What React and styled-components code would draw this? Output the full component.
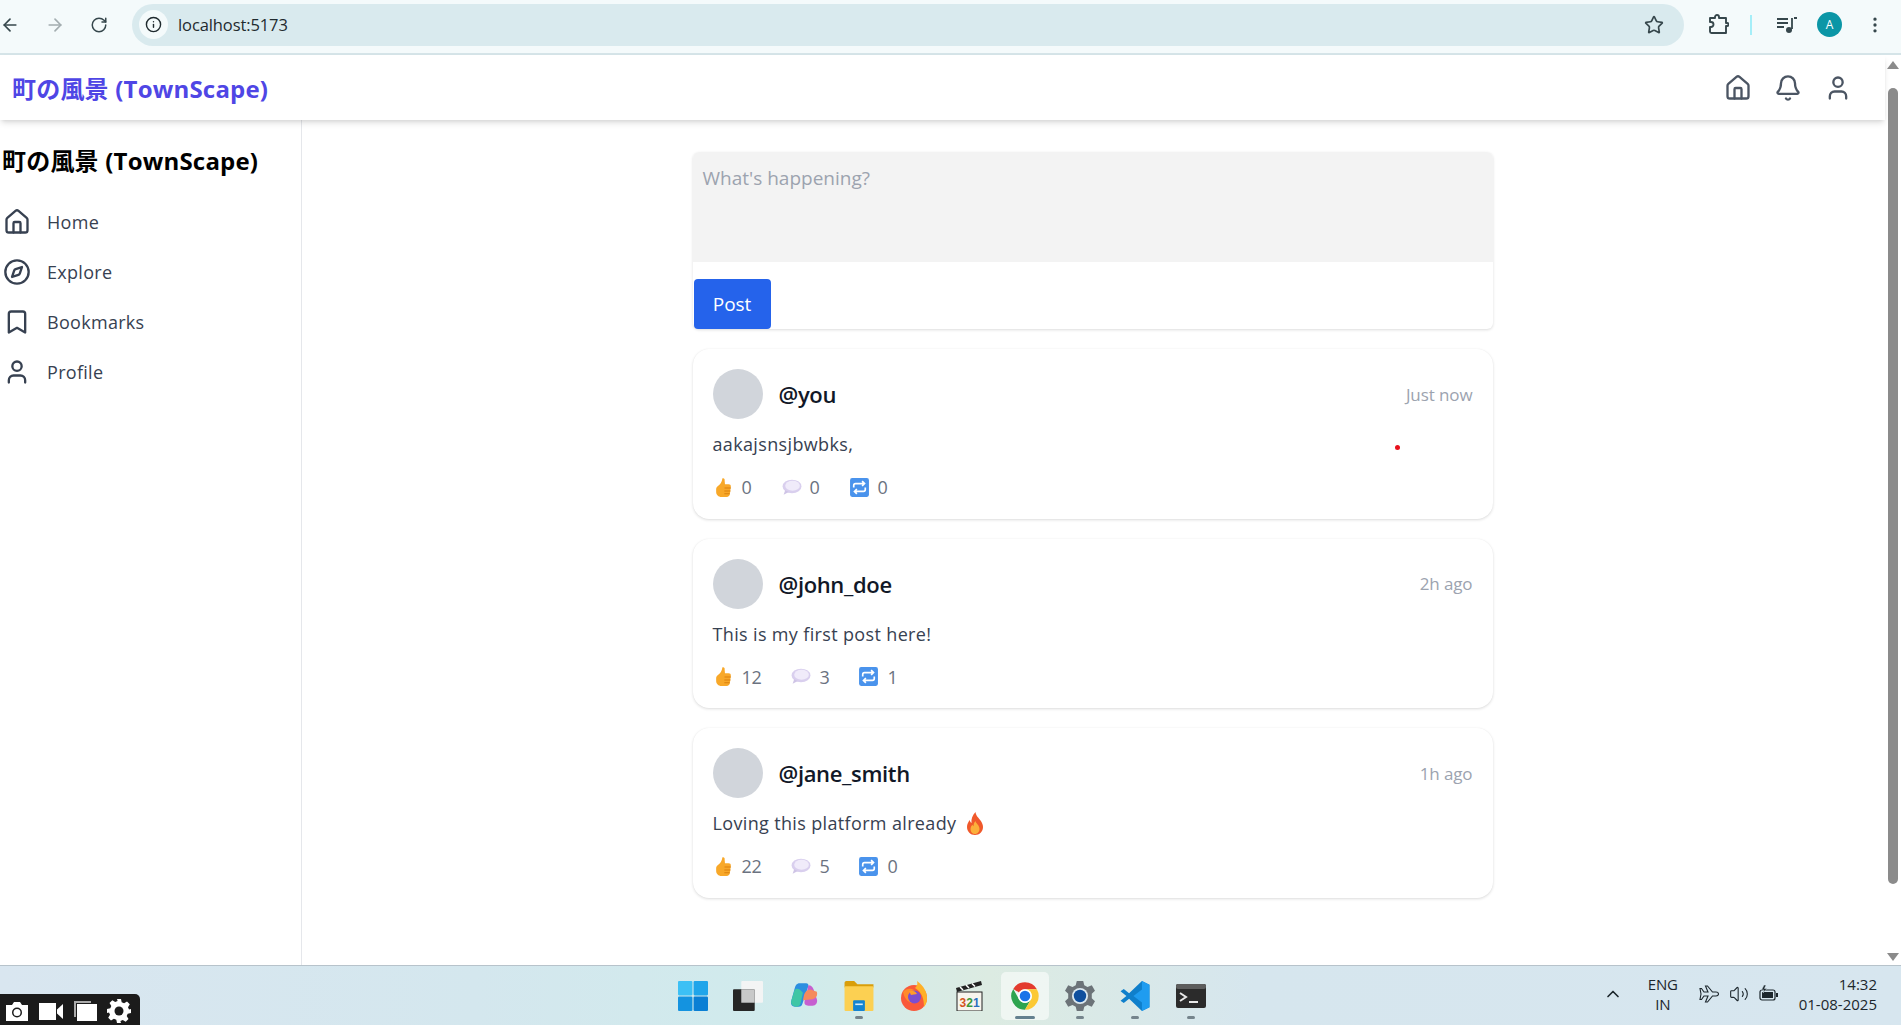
import React from 'react';
import styled, { createGlobalStyle } from 'styled-components';
import {
  ArrowLeft, ArrowRight, RotateCw, Info, Star, EllipsisVertical,
  House, Bell, User, Compass, Bookmark, ChevronUp, Volume2,
} from 'lucide-react';

const FONT = '"Open Sans", "Noto Sans CJK JP", sans-serif';

const GlobalStyle = createGlobalStyle`
  html, body { margin: 0; padding: 0; height: 100%; overflow: hidden; background: #fff; }
  * { box-sizing: border-box; }
  body { font-family: ${FONT}; }
`;

const Screen = styled.div`
  position: relative;
  display: flex;
  flex-direction: column;
  width: 1901px;
  height: 1025px;
  overflow: hidden;
`;

/* browser toolbar */
const ChromeBar = styled.div`
  flex: 0 0 55px;
  display: flex;
  align-items: center;
  padding: 0 0 4px 0;
  background: #f4fafb;
  border-bottom: 2px solid #d5e4e8;
`;

const NavButtons = styled.div`
  display: flex;
  align-items: center;
  gap: 25px;
  width: 132px;
  color: #36474c;
`;

const UrlPill = styled.div`
  flex: 0 0 1552px;
  height: 42px;
  display: flex;
  align-items: center;
  gap: 10px;
  padding: 0 20px 0 7px;
  border-radius: 21px;
  background: #d9eaee;
  color: #1f2a2e;
  font-size: 16.5px;
  letter-spacing: -0.1px;
`;

const InfoChip = styled.span`
  width: 29px;
  height: 29px;
  display: flex;
  align-items: center;
  justify-content: center;
  border-radius: 50%;
  background: #f4fafb;
`;

const UrlText = styled.span`
  flex: 1;
`;

const ChromeTools = styled.div`
  flex: 1;
  display: flex;
  align-items: center;
  padding-left: 24px;
  color: #36474c;
`;

const ToolDivider = styled.span`
  width: 2px;
  height: 20px;
  margin: 0 25px 0 21px;
  background: #a5eef8;
`;

const ProfileBadge = styled.span`
  width: 25px;
  height: 25px;
  margin: 0 23px 0 20px;
  display: flex;
  align-items: center;
  justify-content: center;
  border-radius: 50%;
  background: #0b96a6;
  color: #fff;
  font-size: 12px;
`;

/* page */
const Viewport = styled.div`
  flex: 1;
  min-height: 0;
  display: flex;
`;

const Page = styled.div`
  flex: 1;
  min-width: 0;
  display: flex;
  flex-direction: column;
`;

const TopNav = styled.header`
  position: relative;
  z-index: 1;
  flex: 0 0 65px;
  display: flex;
  align-items: center;
  justify-content: space-between;
  padding: 0 33px 0 12px;
  background: #fff;
  box-shadow: 0 4px 6px -1px rgba(0, 0, 0, 0.12), 0 2px 4px -2px rgba(0, 0, 0, 0.1);
`;

const Brand = styled.div`
  color: #4f46e5;
  font-size: 24px;
  font-weight: 700;
  letter-spacing: 0.2px;
`;

const TopIcons = styled.div`
  display: flex;
  align-items: center;
  gap: 22px;
  color: #4b5563;
`;

const Body = styled.div`
  flex: 1;
  min-height: 0;
  display: flex;
`;

const Sidebar = styled.aside`
  flex: 0 0 302px;
  display: flex;
  flex-direction: column;
  padding: 23px 0 0 2px;
  background: #fff;
  border-right: 1px solid #e5e7eb;
`;

const SideTitle = styled.h2`
  margin: 0 0 18px;
  color: #000;
  font-size: 24px;
  font-weight: 700;
  line-height: 36px;
  letter-spacing: 0.2px;
  white-space: nowrap;
`;

const SideItem = styled.div`
  height: 50px;
  display: flex;
  align-items: center;
  gap: 16px;
  padding-left: 1px;
  color: #374151;
  font-size: 18px;
  letter-spacing: 0.3px;
`;

const Main = styled.main`
  flex: 1;
  display: flex;
  justify-content: center;
  padding: 32px 2px 0 0;
  background: #fff;
`;

const Feed = styled.div`
  width: 800px;
  display: flex;
  flex-direction: column;
  gap: 20px;
`;

const Composer = styled.section`
  display: flex;
  flex-direction: column;
  align-items: flex-start;
  gap: 17px;
  border-radius: 6px;
  background: #fff;
  box-shadow: 0 1px 3px rgba(0, 0, 0, 0.14);
`;

const ComposerInput = styled.textarea`
  width: 100%;
  height: 110px;
  padding: 13px 10px;
  border: none;
  border-radius: 6px 6px 0 0;
  outline: none;
  resize: none;
  background: #f3f3f3;
  font-family: ${FONT};
  font-size: 19px;
  &::placeholder { color: #9ca3af; opacity: 1; }
`;

const PostButton = styled.button`
  width: 77px;
  height: 50px;
  margin-left: 1px;
  border: none;
  border-radius: 4px;
  background: #2563eb;
  color: #fff;
  font-family: ${FONT};
  font-size: 19px;
  letter-spacing: -0.1px;
`;

const Card = styled.article`
  height: 169.6px;
  padding: 20px;
  border-radius: 16px;
  background: #fff;
  box-shadow: 0 1px 3px rgba(0, 0, 0, 0.14), 0 0 1px rgba(0, 0, 0, 0.05);
`;

const CardHeader = styled.div`
  display: flex;
  align-items: center;
  gap: 16px;
`;

const Avatar = styled.div`
  width: 50px;
  height: 50px;
  border-radius: 50%;
  background: #d1d5db;
`;

const Handle = styled.span`
  flex: 1;
  color: #111827;
  font-size: 22px;
  font-weight: 600;
  letter-spacing: -0.35px;
`;

const TimeAgo = styled.span`
  color: #9ca3af;
  font-size: 17px;
  letter-spacing: -0.1px;
`;

const PostText = styled.p`
  display: flex;
  align-items: center;
  gap: 10px;
  height: 26px;
  margin: 12px 0 18px;
  color: #374151;
  font-size: 18px;
  letter-spacing: 0.35px;
`;

const Stats = styled.div`
  display: flex;
  align-items: center;
  gap: 29px;
`;

const Stat = styled.span`
  display: flex;
  align-items: center;
  gap: 8px;
  color: #6b7280;
  font-size: 18px;
  letter-spacing: -0.3px;
`;

const StatIcon = styled.svg`
  display: block;
  width: 21px;
  height: 21px;
`;

const RedDot = styled.span`
  position: absolute;
  left: 1395px;
  top: 445px;
  width: 5px;
  height: 5px;
  border-radius: 50%;
  background: #e8101c;
`;

/* page scrollbar */
const Scrollbar = styled.div`
  flex: 0 0 16px;
  display: flex;
  flex-direction: column;
  align-items: center;
  padding-top: 6px;
  background: #fff;
`;

const ScrollArrow = styled.span`
  width: 0;
  height: 0;
  border-left: 6px solid transparent;
  border-right: 6px solid transparent;
  ${(p) => (p.$down ? 'border-top: 8px solid #8b8b8b;' : 'border-bottom: 8px solid #8b8b8b;')}
`;

const ScrollThumb = styled.span`
  width: 10px;
  height: 796px;
  margin: 19px 0 69px;
  border-radius: 5px;
  background: #8b8b8b;
`;

/* windows taskbar */
const Taskbar = styled.footer`
  position: relative;
  flex: 0 0 60px;
  display: grid;
  grid-template-columns: 669px auto 1fr;
  align-items: center;
  border-top: 1px solid #b7c3cb;
  background: linear-gradient(90deg, #d9e6f0 0%, #d4e7ee 25%, #d0ebec 42%, #dcebe2 52%, #d6e6ee 66%, #d7e6ef 100%);
`;

const CaptureBar = styled.div`
  position: absolute;
  left: 0;
  bottom: 0;
  width: 140px;
  height: 31px;
  display: flex;
  align-items: center;
  gap: 10px;
  padding: 3px 0 0 5px;
  border-radius: 0 5px 0 0;
  background: #1b1b1b;
  color: #fff;
`;

const TaskIcons = styled.div`
  grid-column: 2;
  display: flex;
  gap: 7.3px;
`;

const TaskTile = styled.div`
  position: relative;
  width: 48px;
  height: 48px;
  display: flex;
  align-items: center;
  justify-content: center;
  border-radius: 5px;
  background: ${(p) => (p.$active ? 'rgba(255, 255, 255, 0.55)' : 'transparent')};
  & > svg { width: 30px; height: 30px; }
`;

const RunDot = styled.span`
  position: absolute;
  left: 50%;
  bottom: 1px;
  width: ${(p) => (p.$active ? '20px' : '8px')};
  height: 3px;
  transform: translateX(-50%);
  border-radius: 2px;
  background: ${(p) => (p.$active ? '#64808f' : '#75848c')};
`;

const Tray = styled.div`
  grid-column: 3;
  display: flex;
  align-items: center;
  justify-content: flex-end;
  padding: 0 24px 3px 0;
  color: #1c262c;
  font-size: 15px;
`;

const Lang = styled.div`
  margin: 0 21px 0 25px;
  text-align: center;
  line-height: 20px;
  letter-spacing: -0.2px;
`;

const TrayIcons = styled.div`
  display: flex;
  align-items: center;
  gap: 10px;
`;

const Clock = styled.div`
  margin-left: 20px;
  text-align: right;
  line-height: 20px;
  letter-spacing: 0;
`;

const PuzzleIcon = () => (
  <svg width="21" height="21" viewBox="0 0 21 21" fill="none" stroke="currentColor" strokeWidth="1.900" strokeLinejoin="round">
    <path d="M2 4h5V3a2 2 0 0 1 4 0v1h7v5h1a1.500 1.500 0 0 1 0 3h-1v7H3.500c-1 0-1.500-.5-1.500-1.500V13h1a2.500 2.500 0 0 0 0-5H2z" />
  </svg>
);

const ThumbIcon = () => (
  <StatIcon viewBox="0 0 20 20">
    <path d="M9 1.200c1.600-.5 2.400.8 2.100 2.400L11.400 7H15c1.300 0 2 .9 2 2l-.9 7.300c-.3 1.700-1.300 2.700-3 2.700H8c-2.800 0-5-2-5-5v-2.300c0-1.500.8-2.500 2-3.300 2-1.400 3.300-3.200 4-7.200z" fill="#f8a829" />
    <path d="M11 10.500h6M10.800 13.300h5.800M10.800 16h5" stroke="#d97f0e" strokeWidth="1" fill="none" />
  </StatIcon>
);

const BubbleIcon = () => (
  <StatIcon viewBox="0 0 20 20">
    <ellipse cx="10.500" cy="9" rx="9" ry="6.500" fill="#d9cfee" />
    <path d="M4 12.500 2.500 17l5-2.800z" fill="#cfc4e6" />
    <ellipse cx="11" cy="8.300" rx="7" ry="4.800" fill="#f0ebfa" />
  </StatIcon>
);

const RepeatIcon = () => (
  <StatIcon viewBox="0 0 20 20">
    <rect x="1" y="1" width="18" height="18" rx="2" fill="#4a93ec" />
    <path d="M4.500 10V8c0-1 .7-1.700 1.700-1.700h8M12.500 4l2.300 2.300-2.300 2.300M15.500 10v2c0 1-.7 1.700-1.700 1.700h-8M7.500 16l-2.300-2.300L7.500 11.400" stroke="#fff" strokeWidth="1.600" fill="none" />
  </StatIcon>
);

const FlameIcon = () => (
  <svg width="18" height="23" viewBox="0 0 18 23">
    <path d="M9.500 0c.5 4 3 5.500 5 8.500 1.500 2.200 2.500 4.200 2.500 6.500 0 4.500-3.500 8-8 8s-8-3.500-8-8c0-3 1.300-5 2.800-7 .3 1.500.8 2.500 1.700 3C5 7 6.500 3 9.500 0z" fill="#f0592b" />
    <path d="M9.500 9c.3 2.500 4 4 4 8 0 2.800-2 5-4.500 5s-4.500-2-4.500-4.800c0-2 1-3.400 2-4.400.2.800.6 1.300 1 1.500C7.500 12.500 8 10.500 9.500 9z" fill="#fbb03b" />
  </svg>
);

const StartIcon = () => (
  <svg viewBox="0 0 27 27">
    <rect x="0" y="0" width="13" height="13" rx="1" fill="#3cc0f5" />
    <rect x="14" y="0" width="13" height="13" rx="1" fill="#1fa5ea" />
    <rect x="0" y="14" width="13" height="13" rx="1" fill="#1493e0" />
    <rect x="14" y="14" width="13" height="13" rx="1" fill="#0a7fd4" />
  </svg>
);

const TaskViewIcon = () => (
  <svg viewBox="0 0 29 29">
    <rect x="8" y="0" width="21" height="21" rx="1" fill="#f3f4f4" />
    <rect x="0" y="8" width="21" height="21" rx="1" fill="#262626" />
    <rect x="8" y="8" width="13" height="13" fill="#c8c9c9" />
  </svg>
);

const CopilotIcon = () => (
  <svg viewBox="0 0 28 28">
    <path d="M10 2c-3 0-4 2-5 6L2 19c-.7 3 1 5 3.500 5H9c2 0 3-1 3.600-3L18 5c.5-2-.5-3-2-3z" fill="#2b8fe0" />
    <path d="M2 19 5 9c1-2 3-2 5-1l3 3-2 9c-.6 3-2 4-4 4-3 0-5.500-2-5-5z" fill="#3fc6a5" />
    <path d="M18 4c3 0 4 1.500 5 4l3 9c1 3-1 6-4 6h-4c-2.500 0-4-1-3.500-4L17 9z" fill="#c65fd0" />
    <path d="M26 10c1 4-1 6-4 7l-9 1 1-5c1-3 3-5 6-5z" fill="#f58a5c" />
  </svg>
);

const FolderIcon = () => (
  <svg viewBox="0 0 27 28">
    <path d="M0 2c0-1 .6-2 1.700-2H9l3 3h15v3H0z" fill="#d99e0a" />
    <rect x="0" y="5" width="27" height="23" rx="1" fill="#fcd052" />
    <rect x="8" y="18" width="11" height="10" rx="1" fill="#1584d2" />
    <rect x="10" y="21" width="7" height="1.500" fill="#d7ecfa" />
  </svg>
);

const FirefoxIcon = () => (
  <svg viewBox="0 0 28 30">
    <circle cx="14" cy="17" r="13" fill="#f9593a" />
    <path d="M17 0c7 5 10 11 10 17 0 4-1 6-3 9 0-8-2-15-9-19 2-2 3-4 2-7z" fill="#ffb027" />
    <path d="M3 11c3-4 8-4 11-2 3 1 5 4 5 8l-7 5c-5-1-8-6-9-11z" fill="#ff8a2b" />
    <circle cx="14.500" cy="16" r="6.500" fill="#7b4ecf" />
    <path d="M9 10c3-1 7 0 8 3l-6 1z" fill="#ff9c2a" />
  </svg>
);

const ClapperIcon = () => (
  <svg viewBox="0 0 28 30">
    <path d="M1 7 26 0l1 4L2 11z" fill="#222" />
    <path d="M5 6 8 9M11 4l3 3M17 2.500l3 3" stroke="#fff" strokeWidth="1.500" />
    <rect x="2" y="11" width="25" height="19" fill="#f7f5ee" stroke="#222" strokeWidth="1" />
    <text x="4.500" y="26" fontFamily="'Liberation Sans', sans-serif" fontWeight="700" fontSize="12">
      <tspan fill="#d4561c">3</tspan><tspan fill="#3c9a3a">2</tspan><tspan fill="#2c6fc0">1</tspan>
    </text>
  </svg>
);

const ChromeIcon = () => (
  <svg viewBox="0 0 48 48">
    <path d="M24 2a22 22 0 0 1 19 11H24a11 11 0 0 0-9.500 5.500L5.200 12.600A22 22 0 0 1 24 2z" fill="#e33b2e" />
    <path d="M14.500 29.500 5.200 12.600A22 22 0 0 0 24 46l9.500-16.500a11 11 0 0 1-19 0z" fill="#2ea44f" />
    <path d="M43 13a22 22 0 0 1-19 33l9.500-16.500A11 11 0 0 0 33.500 18.500 11 11 0 0 0 24 13z" fill="#fcc934" />
    <circle cx="24" cy="24" r="11" fill="#fff" />
    <circle cx="24" cy="24" r="8.500" fill="#1a73e8" />
  </svg>
);

const SettingsIcon = () => (
  <svg viewBox="0 0 28 28">
    <path d="M11 0h6l1 4 3 1.500L25 4l3 5-3 3v4l3 3-3 5-4-1.500L18 24l-1 4h-6l-1-4-3-1.500L3 24l-3-5 3-3v-4L0 9l3-5 4 1.500L10 4z" fill="#6c7378" />
    <circle cx="14" cy="14" r="7.500" fill="#dce9f0" />
    <circle cx="14" cy="14" r="5.800" fill="#0f4f9e" />
  </svg>
);

const VsCodeIcon = () => (
  <svg viewBox="0 0 27 28">
    <path d="M20 0 27 3.500v21L20 28 8 16.500 3 20.500 0 18.500 5.500 14 0 9.500 3 7.500 8 11.500z" fill="#0f7fcb" />
    <path d="M20 0 27 3.500v21L20 28V20L12 14l8-6z" fill="#1f9cf0" />
  </svg>
);

const TerminalIcon = () => (
  <svg viewBox="0 0 30 24">
    <rect width="30" height="24" rx="2" fill="#2b2b2b" />
    <rect width="30" height="5" rx="2" fill="#5d5d5d" />
    <path d="m4 9 6 4-6 4" stroke="#e8e8e8" strokeWidth="2" fill="none" />
    <path d="M13 18h9" stroke="#e8e8e8" strokeWidth="2" />
  </svg>
);

const PlaneIcon = () => (
  <svg width="20" height="20" viewBox="0 0 20 20" fill="none" stroke="currentColor" strokeWidth="1.100">
    <path d="M1 4.500h1.500L5 8h4L6.500 2H8.500L13.500 8h3.500c1.500 0 2.500 1 2.500 2s-1 2-2.500 2h-3.500L8.500 18H6.500L9 12H5L2.500 15.500H1L2 10z" />
  </svg>
);

const BatteryIcon = () => (
  <svg width="20" height="18" viewBox="0 0 20 18">
    <rect x="1" y="5" width="15" height="10" rx="2" fill="none" stroke="currentColor" strokeWidth="1.200" />
    <rect x="3" y="7" width="11" height="6" fill="currentColor" />
    <rect x="17" y="8" width="2" height="4" fill="currentColor" />
    <path d="M5 0 2.500 5H5L4 8l4-4.500H5.500L7 0z" fill="currentColor" stroke="#d7e6ef" strokeWidth=".5" />
  </svg>
);

const CameraGlyph = () => (
  <svg width="24" height="20" viewBox="0 0 24 20">
    <path d="M1 4h6l2-3h6l2 3h6v16H1z" fill="#fff" />
    <circle cx="12" cy="11.500" r="5" fill="#1b1b1b" />
    <circle cx="12" cy="11.500" r="3.500" fill="#fff" />
  </svg>
);

const VideoGlyph = () => (
  <svg width="24" height="17" viewBox="0 0 24 17">
    <rect width="17" height="17" fill="#fff" />
    <path d="M18 6.500 24 1v15l-6-5.500z" fill="#fff" />
  </svg>
);

const WindowsGlyph = () => (
  <svg width="24" height="20" viewBox="0 0 24 20">
    <path d="M1 0h17v2H3v14H1z" fill="#aaa" />
    <rect x="4" y="3" width="20" height="17" fill="#fff" />
  </svg>
);

const GearGlyph = () => (
  <svg width="24" height="24" viewBox="0 0 24 24">
    <path d="M10 0h4l.7 3.300 2.400 1 2.900-1.800 2.800 2.800-1.800 2.900 1 2.400L24 10v4l-3.300.7-1 2.400 1.800 2.900-2.800 2.800-2.900-1.800-2.400 1L14 24h-4l-.7-3.300-2.400-1L4 21.500 1.200 18.700 3 15.800l-1-2.400L0 14v-4l3.300-.7 1-2.400L2.500 4 5.300 1.200 8.200 3l2.400-1z" fill="#fff" />
    <circle cx="12" cy="12" r="4.500" fill="#1b1b1b" />
  </svg>
);

const POSTS = [
  { user: '@you', time: 'Just now', text: 'aakajsnsjbwbks,', likes: 0, comments: 0, shares: 0 },
  { user: '@john_doe', time: '2h ago', text: 'This is my first post here!', likes: 12, comments: 3, shares: 1 },
  { user: '@jane_smith', time: '1h ago', text: 'Loving this platform already', flame: true, likes: 22, comments: 5, shares: 0 },
];

const SIDE_LINKS = [
  { label: 'Home', Icon: House },
  { label: 'Explore', Icon: Compass },
  { label: 'Bookmarks', Icon: Bookmark },
  { label: 'Profile', Icon: User },
];

const TASK_APPS = [
  { id: 'start', Icon: StartIcon },
  { id: 'taskview', Icon: TaskViewIcon },
  { id: 'copilot', Icon: CopilotIcon },
  { id: 'files', Icon: FolderIcon, running: true },
  { id: 'firefox', Icon: FirefoxIcon },
  { id: 'player', Icon: ClapperIcon },
  { id: 'chrome', Icon: ChromeIcon, running: true, active: true },
  { id: 'settings', Icon: SettingsIcon, running: true },
  { id: 'vscode', Icon: VsCodeIcon, running: true },
  { id: 'terminal', Icon: TerminalIcon, running: true },
];

const PostCard = ({ post }) => (
  <Card>
    <CardHeader>
      <Avatar />
      <Handle>{post.user}</Handle>
      <TimeAgo>{post.time}</TimeAgo>
    </CardHeader>
    <PostText>
      {post.text}
      {post.flame && <FlameIcon />}
    </PostText>
    <Stats>
      <Stat><ThumbIcon />{post.likes}</Stat>
      <Stat><BubbleIcon />{post.comments}</Stat>
      <Stat><RepeatIcon />{post.shares}</Stat>
    </Stats>
  </Card>
);

const App = () => (
  <Screen>
    <GlobalStyle />
    <ChromeBar>
      <NavButtons>
        <ArrowLeft size={20} />
        <ArrowRight size={20} color="#a3adb0" />
        <RotateCw size={18} />
      </NavButtons>
      <UrlPill>
        <InfoChip><Info size={17} color="#1f2a2e" /></InfoChip>
        <UrlText>localhost:5173</UrlText>
        <Star size={20} color="#36474c" />
      </UrlPill>
      <ChromeTools>
        <PuzzleIcon />
        <ToolDivider />
        <svg width="20" height="18" viewBox="0 0 20 18" fill="none" stroke="currentColor" strokeWidth="1.800">
          <path d="M0 3h11M0 7h11M0 11h7M17 2h3M15 2v11" />
          <circle cx="12" cy="14" r="3" fill="currentColor" stroke="none" />
        </svg>
        <ProfileBadge>A</ProfileBadge>
        <EllipsisVertical size={20} />
      </ChromeTools>
    </ChromeBar>
    <Viewport>
      <Page>
        <TopNav>
          <Brand>町の風景 (TownScape)</Brand>
          <TopIcons>
            <House size={28} />
            <Bell size={28} />
            <User size={28} />
          </TopIcons>
        </TopNav>
        <Body>
          <Sidebar>
            <SideTitle>町の風景 (TownScape)</SideTitle>
            {SIDE_LINKS.map(({ label, Icon }) => (
              <SideItem key={label}>
                <Icon size={28} />
                {label}
              </SideItem>
            ))}
          </Sidebar>
          <Main>
            <Feed>
              <Composer>
                <ComposerInput placeholder="What's happening?" />
                <PostButton>Post</PostButton>
              </Composer>
              {POSTS.map((post) => (
                <PostCard key={post.user} post={post} />
              ))}
            </Feed>
          </Main>
        </Body>
      </Page>
      <Scrollbar>
        <ScrollArrow />
        <ScrollThumb />
        <ScrollArrow $down />
      </Scrollbar>
    </Viewport>
    <RedDot />
    <Taskbar>
      <CaptureBar>
        <CameraGlyph />
        <VideoGlyph />
        <WindowsGlyph />
        <GearGlyph />
      </CaptureBar>
      <TaskIcons>
        {TASK_APPS.map(({ id, Icon, running, active }) => (
          <TaskTile key={id} $active={active}>
            <Icon />
            {running && <RunDot $active={active} />}
          </TaskTile>
        ))}
      </TaskIcons>
      <Tray>
        <ChevronUp size={20} />
        <Lang>ENG<br />IN</Lang>
        <TrayIcons>
          <PlaneIcon />
          <Volume2 size={20} strokeWidth={1.3} />
          <BatteryIcon />
        </TrayIcons>
        <Clock>14:32<br />01-08-2025</Clock>
      </Tray>
    </Taskbar>
  </Screen>
);

export default App;
